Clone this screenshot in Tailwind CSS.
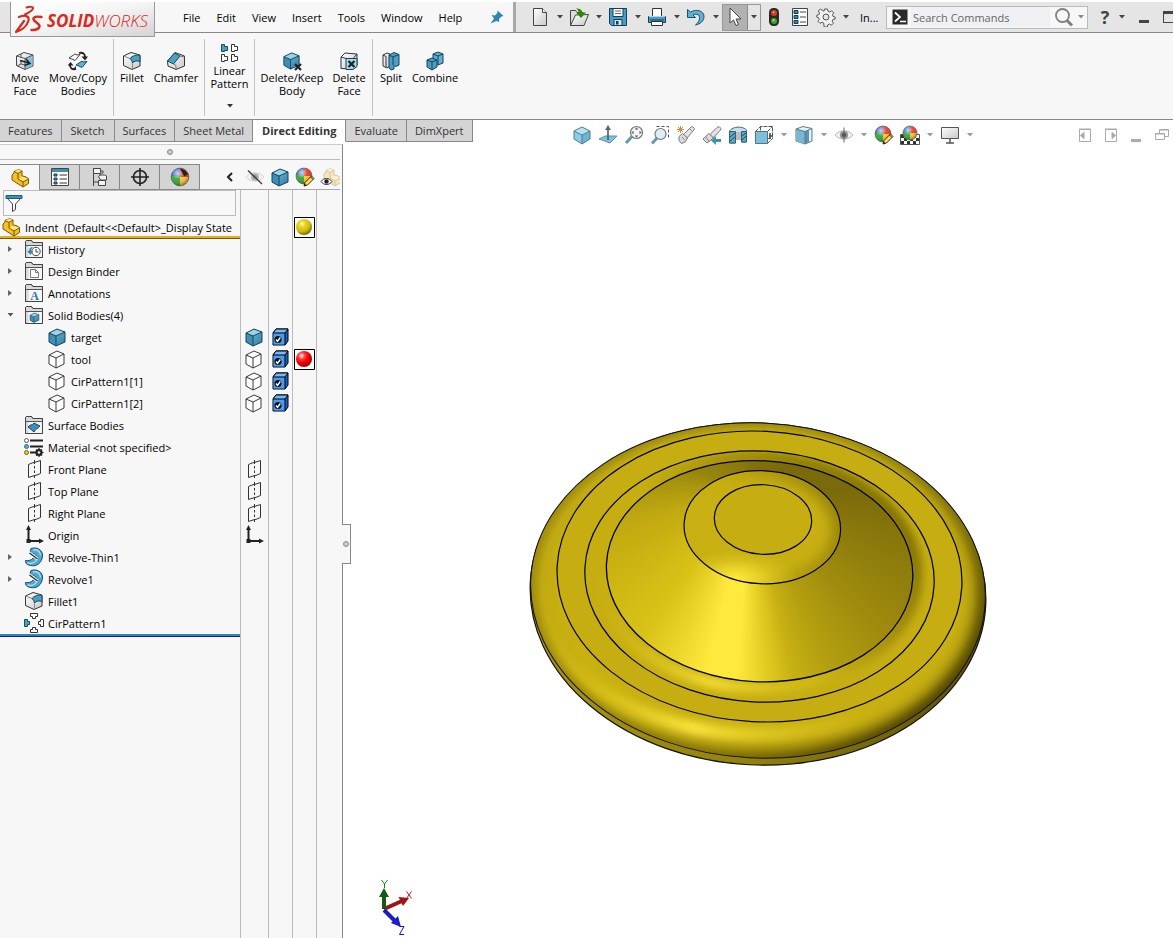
<!DOCTYPE html>
<html lang="en">

<head>
    <meta charset="UTF-8" />
    <meta name="viewport" content="width=device-width, initial-scale=1.0" />
    <title>SOLIDWORKS - Indent</title>
    <script src="https://cdn.jsdelivr.net/npm/@tailwindcss/browser@4"></script>
</head>

<body class="h-screen flex flex-col overflow-hidden bg-white text-black font-['Open_Sans','Noto_Sans',sans-serif] text-[11px] leading-[13px]">

    <!-- Icon sprite -->
    <svg class="absolute w-0 h-0" aria-hidden="true">
        <defs>
            <linearGradient id="blueFace" x1="0" y1="0" x2="1" y2="1">
                <stop offset="0" stop-color="#7cc0dc" />
                <stop offset="1" stop-color="#2f7da3" />
            </linearGradient>
            <linearGradient id="greyFace" x1="0" y1="0" x2="1" y2="1">
                <stop offset="0" stop-color="#ffffff" />
                <stop offset="1" stop-color="#c9c9c9" />
            </linearGradient>
            <radialGradient id="yellowBall" cx=".38" cy=".3" r=".7">
                <stop offset="0" stop-color="#fffbe0" />
                <stop offset=".25" stop-color="#ecd927" />
                <stop offset=".7" stop-color="#cdb710" />
                <stop offset="1" stop-color="#766800" />
            </radialGradient>
            <radialGradient id="redBall" cx=".35" cy=".3" r=".7">
                <stop offset="0" stop-color="#ffffff" />
                <stop offset=".3" stop-color="#ff3b3b" />
                <stop offset=".6" stop-color="#fa0000" />
                <stop offset="1" stop-color="#a80000" />
            </radialGradient>
            <radialGradient id="shine" cx=".38" cy=".3" r=".7">
                <stop offset="0" stop-color="#fff" stop-opacity=".75" />
                <stop offset=".5" stop-color="#fff" stop-opacity=".05" />
                <stop offset="1" stop-color="#000" stop-opacity=".35" />
            </radialGradient>
            <clipPath id="ballClip">
                <circle cx="9" cy="9" r="8" />
            </clipPath>
        </defs>

        <symbol id="i-caret" viewBox="0 0 6 4">
            <path d="M0 0h6L3 3.500z" fill="currentColor" />
        </symbol>
        <symbol id="i-cube" viewBox="0 0 20 20">
            <path d="M2 6 10 2l8 3v10l-9 4-7-4z" fill="url(#blueFace)" />
            <path d="M2 6 10 2l8 3-9 4z" fill="#9ad2e8" />
            <path d="M2 6v9l7 4V9z" fill="#3f8fb5" />
            <path d="M2 6 10 2l8 3v10l-9 4-7-4zM2 6l7 3 9-4M9 9v10" fill="none" stroke="#16455e" />
        </symbol>
        <symbol id="i-cube-light" viewBox="0 0 20 20">
            <path d="M10 2 18 6v8l-8 5-8-5V6z" fill="#8fcbe2" />
            <path d="M10 2 18 6l-8 4-8-4z" fill="#b9e1f0" />
            <path d="M18 6v8l-8 5v-9z" fill="#6fb4d0" />
            <path d="M10 2 18 6v8l-8 5-8-5V6zM2 6l8 4 8-4M10 10v9" fill="none" stroke="#4f7f96" />
        </symbol>
        <symbol id="i-cube-line" viewBox="0 0 20 20">
            <path d="M2 6 10 2l7 3v10l-8 4-7-4zM2 6l7 3 8-4M9 9v10" fill="#fff" stroke="#3a3a3a" stroke-linejoin="round" />
        </symbol>
        <symbol id="i-cube-check" viewBox="0 0 20 20">
            <path d="M2 6l3-4h12v12l-3 4H2z" fill="#1b62cf" stroke="#000" stroke-linejoin="round" />
            <path d="M2.500 6h11.500v11.500H2.500z" fill="#4a9df0" />
            <path d="M2 6 5 2h12l-3 4z" fill="#75b9f7" stroke="#000" stroke-linejoin="round" />
            <path d="M14 6v12" stroke="#000" />
            <circle cx="7" cy="12.500" r="3.600" fill="#111" />
            <path d="M5 12.500 6.500 14.300 9.300 10.500" fill="none" stroke="#fff" stroke-width="1.400" />
        </symbol>
        <symbol id="i-part" viewBox="0 0 20 20">
            <path d="M2 7 4 5V3.500L8.500 1.500 12 3v5l3 .500 3.500 2v5L13 19 2 12z" fill="#f2c029" stroke="#7d5700" stroke-linejoin="round" />
            <path d="M4 3.500 8 5.500 12 3 8.500 1.500zM8 11l4-2.500 6.500 2.500L13 14z" fill="#ffe27a" />
            <path d="M4 3.500 8 5.500 12 3M8 5.500V11l5 3 5.500-3M13 14v5" fill="none" stroke="#7d5700" />
        </symbol>
        <symbol id="i-folder" viewBox="0 0 20 20">
            <path d="M1.500 18.500v-16l1-1h5l1.500 2h9.500v15z" fill="#d8d8d8" stroke="#444" />
            <path d="M4.500 6.500h14v12h-14z" fill="#f6f6f6" />
            <path d="M2 6.500h16" stroke="#555" />
            <path d="M1.500 18.500v-16l1-1h5l1.500 2h9.500v15z" fill="none" stroke="#444" />
        </symbol>
        <symbol id="i-plane" viewBox="0 0 20 20">
            <path d="M4.500 5.500 8 4M12 3l4.500-1.500v13L13 16M9 17l-4.500 1.500v-13" fill="none" stroke="#333" />
            <path d="M10.500 1v4M10.500 7v2.500M10.500 11.500V14M10.500 16v3M8 4l4-1M9 17l4-1" stroke="#333" />
        </symbol>
        <symbol id="i-origin" viewBox="0 0 20 20">
            <path d="M4.500 4v12h11" fill="none" stroke="#222" stroke-width="2" />
            <path d="M4.500 0 7 5H2zM20 16l-5-2.500v5z" fill="#222" />
            <path d="M2.500 14h4v4h-4z" fill="#222" />
        </symbol>
        <symbol id="i-revolve" viewBox="0 0 20 20">
            <path d="M7 1.500C13-.5 19 3 18.500 9c-.5 7-6 11-12 9.500C3 18 1 16 1.500 13.500c3 .5 6-.2 7.500-2.500L14 10.500c-1 0-2-1-2.500-2.500C10.500 6 9 6.500 8 7 6 6 6 3.500 7 1.500z" fill="#4fa6cb" stroke="#15506d" />
            <path d="M9 3c4-1 7.500 1.500 7.500 5.500M3.500 16c4 1 8-.5 10-4" fill="none" stroke="#a8dcf0" stroke-width="1.500" />
            <path d="M5.500 6 13.500 12" stroke="#fff" stroke-width="3" />
            <path d="M5.500 6 13.500 12" stroke="#222" stroke-width="1.200" />
        </symbol>
        <symbol id="i-fillet" viewBox="0 0 20 20">
            <path d="M1.500 5 9 1.500 18 4v11l-8 3.500-8.500-4z" fill="url(#greyFace)" stroke="#333" stroke-linejoin="round" />
            <path d="M1.500 5 8 7.500c2 1 2.500 3 2.500 5v6" fill="none" stroke="#888" />
            <path d="M8 7.500C10 5 15 3 18 5v6c-2-2-6-1-7.500 1C10 9.500 9.500 8.500 8 7.500z" fill="#4b9ec4" stroke="#174c66" />
        </symbol>
        <symbol id="i-chamfer" viewBox="0 0 20 20">
            <path d="M1.500 10 9 1.500 18.500 5v10L10 18.500 2 15z" fill="url(#greyFace)" stroke="#333" stroke-linejoin="round" />
            <path d="M1.500 10 8.500 2l5.500 3-6.500 8z" fill="#4b9ec4" stroke="#174c66" />
            <path d="m14 5 4.500 1M7.500 13l2.500 1.500V18" fill="none" stroke="#777" />
        </symbol>
        <symbol id="i-ball" viewBox="0 0 18 18">
            <g clip-path="url(#ballClip)">
                <path d="M0 0h9v9H0z" fill="#3567c8" />
                <path d="M9 0h9v10H9z" fill="#e33a2b" />
                <path d="M0 8h9v10H0z" fill="#35a435" />
                <path d="M9 9h9v9H9z" fill="#f0c62d" />
            </g>
            <circle cx="9" cy="9" r="8" fill="url(#shine)" stroke="#555" stroke-width=".6" />
        </symbol>
        <symbol id="i-pencil" viewBox="0 0 12 12">
            <path d="M1 11 2 7.500 8.500 1 11 3.500 4.500 10z" fill="#ffd86b" stroke="#3a2a00" />
            <path d="M1 11 1.700 8.500 3.500 10.300z" fill="#222" />
            <path d="M7.500 2 10 4.500" stroke="#3a2a00" />
        </symbol>
        <symbol id="i-eye" viewBox="0 0 20 20">
            <path d="M1 10C5 4.500 15 4.500 19 10 15 15.500 5 15.500 1 10z" fill="#eee" stroke="#bbb" />
            <circle cx="10" cy="10" r="4" fill="#8f8f8f" />
            <circle cx="10" cy="10" r="2" fill="#444" />
        </symbol>
        <symbol id="i-x" viewBox="0 0 8 8">
            <path d="M1 1l6 6M7 1 1 7" stroke="#222" stroke-width="2.200" />
        </symbol>
    </svg>

    <!-- Title bar -->
    <header class="mt-0.5 h-[31px] shrink-0 flex border-b border-[#888] bg-[#e5e5e5]">
        <div class="w-[513px] shrink-0 flex bg-[#f7f7f7]">
            <div class="w-2.5 shrink-0 bg-[#e5e5e5]"></div>
            <div class="relative z-10 h-[35px] w-[145px] shrink-0 flex items-center gap-1 pl-1 border border-t-0 border-[#999] bg-gradient-to-br from-white via-[#f4f4f4] to-[#d4d4d4]">
                <svg class="w-7 h-[29px] shrink-0" viewBox="16 2 28 29" fill="none" stroke="#da291c" stroke-linecap="round" stroke-linejoin="round" aria-hidden="true">
                    <path d="M27.500 4.500C31 3.500 34.500 3.500 34 5.500 33.500 7.500 30 9.500 26 11.500" stroke-width="2" />
                    <path d="M20 14C26 11.500 30.500 13 29.500 17.500 28 23.500 22 27.500 17 29L25 18" stroke-width="2.200" />
                    <path d="M42.500 14C37.500 13 34 14 34.500 16.500 35 19 41.500 20.500 40.500 23.500 39.500 26.500 35.500 27.200 32.500 27" stroke-width="2.400" />
                </svg>
                <h1 class="text-[17px] leading-[20px] italic font-bold text-[#da291c] pt-1">SOLID<span class="font-light">WORKS</span></h1>
            </div>
            <nav class="flex items-center gap-4 pl-7 text-[11px]">
                <a href="#">File</a>
                <a href="#">Edit</a>
                <a href="#">View</a>
                <a href="#">Insert</a>
                <a href="#">Tools</a>
                <a href="#">Window</a>
                <a href="#">Help</a>
            </nav>
            <button class="ml-auto mr-2 w-4" aria-label="Pin menu">
                <svg class="w-4 h-4" viewBox="0 0 16 16" aria-hidden="true">
                    <path d="M8.500 1.500 14.500 7l-2 .5-2.500 2.500.2 3L7.500 12 1.500 14.500 5 9.500 2.500 6l3.500.5L8.300 4z" fill="#2f87b3" />
                </svg>
            </button>
        </div>
        <div class="w-[3px] shrink-0 bg-[#a8a8a8]"></div>

        <!-- Quick access -->
        <div class="flex flex-1 items-center pl-[11px] text-[#444] min-w-0">
            <button class="w-[26px] shrink-0 flex justify-center" aria-label="New">
                <svg class="w-5 h-5" viewBox="0 0 20 20" aria-hidden="true">
                    <path d="M3.500 1.500h9l4 4v13h-13z" fill="url(#greyFace)" stroke="#444" />
                    <path d="M12.500 1.500v4h4" fill="#fff" stroke="#444" />
                </svg>
            </button>
            <button class="w-[13px] shrink-0 flex justify-center" aria-label="New options"><svg class="w-1.5 h-1"><use href="#i-caret" /></svg></button>
            <button class="w-[26px] shrink-0 flex justify-center" aria-label="Open">
                <svg class="w-5 h-5" viewBox="0 0 20 20" aria-hidden="true">
                    <path d="M1.500 18.500v-15h5l1.500 2h6v13z" fill="#ddd" stroke="#444" />
                    <path d="M1.500 18.500 6.500 8l13-.5-4.500 11z" fill="url(#greyFace)" stroke="#444" />
                    <path d="M7 1.500c4 0 6 1.500 6.500 4H17l-5 5.500-4.500-5H10C9.500 4 9 3 7 1.500z" fill="#2c8a00" />
                </svg>
            </button>
            <button class="w-[13px] shrink-0 flex justify-center" aria-label="Open options"><svg class="w-1.5 h-1"><use href="#i-caret" /></svg></button>
            <button class="w-[26px] shrink-0 flex justify-center" aria-label="Save">
                <svg class="w-5 h-5" viewBox="0 0 20 20" aria-hidden="true">
                    <path d="M1.500 1.500h17v17h-15l-2-2z" fill="#4a9cc2" stroke="#123f57" />
                    <path d="M5 1.500h10v8H5z" fill="#fff" stroke="#123f57" />
                    <path d="M7 4h6M7 6.500h6" stroke="#666" />
                    <path d="M6 12.500h8v6H6z" fill="#cfe6f1" stroke="#123f57" />
                    <path d="M8 14h2.500v3.500H8z" fill="#123f57" />
                </svg>
            </button>
            <button class="w-[13px] shrink-0 flex justify-center" aria-label="Save options"><svg class="w-1.5 h-1"><use href="#i-caret" /></svg></button>
            <button class="w-[26px] shrink-0 flex justify-center" aria-label="Print">
                <svg class="w-5 h-5" viewBox="0 0 20 20" aria-hidden="true">
                    <path d="M5.500 9V1.500h9V9" fill="#fff" stroke="#333" />
                    <path d="M1.500 9.500h17v6h-17z" fill="#4a9cc2" stroke="#123f57" />
                    <path d="M2 9.500h16" stroke="#a8d8ec" />
                    <path d="M4.500 14.500h11v4h-11z" fill="#fff" stroke="#333" />
                    <path d="M3 13h14" stroke="#123f57" />
                </svg>
            </button>
            <button class="w-[13px] shrink-0 flex justify-center" aria-label="Print options"><svg class="w-1.5 h-1"><use href="#i-caret" /></svg></button>
            <button class="w-[26px] shrink-0 flex justify-center" aria-label="Undo">
                <svg class="w-5 h-5" viewBox="0 0 20 20" aria-hidden="true">
                    <path d="M1.500 2.500v8h8L7 8c4-2 7 0 6.500 3.500-.2 2.500-1.500 4.500-4 6.500 5-1 8.500-4 8.500-8.500C18 4 11 1.500 4.500 5z" fill="#5fb0d3" stroke="#17516e" stroke-linejoin="round" />
                </svg>
            </button>
            <button class="w-[13px] shrink-0 flex justify-center" aria-label="Undo options"><svg class="w-1.5 h-1"><use href="#i-caret" /></svg></button>
            <div class="w-[39px] h-[27px] shrink-0 flex border border-[#999]">
                <button class="w-[25px] flex justify-center items-center bg-[#b1b1b1] border-r border-[#888]" aria-label="Select">
                    <svg class="w-5 h-5" viewBox="0 0 20 20" aria-hidden="true">
                        <path d="M5 1v15l3.500-3 2.500 5.500 2.500-1L11 12h5z" fill="#fff" stroke="#444" />
                    </svg>
                </button>
                <button class="flex-1 flex justify-center items-center" aria-label="Select options"><svg class="w-1.5 h-1"><use href="#i-caret" /></svg></button>
            </div>
            <button class="w-[26px] shrink-0 flex justify-center" aria-label="Rebuild">
                <svg class="w-5 h-5" viewBox="0 0 20 20" aria-hidden="true">
                    <rect x="5" y="1" width="10" height="18" rx="4.500" fill="#2a2a2a" />
                    <circle cx="10" cy="6" r="3" fill="#e03a1e" />
                    <circle cx="10" cy="14" r="3" fill="#3da52a" />
                    <circle cx="9.500" cy="5.200" r="1" fill="#ff9d80" />
                    <circle cx="9.500" cy="13.200" r="1" fill="#a9e89a" />
                </svg>
            </button>
            <button class="w-[26px] shrink-0 flex justify-center" aria-label="File properties">
                <svg class="w-5 h-5" viewBox="0 0 20 20" aria-hidden="true">
                    <path d="M2.500 1.500h15v17h-15z" fill="#fff" stroke="#444" />
                    <path d="M4 3.500h4v3H4zM4 8.500h4v3H4zM4 13.500h4v3H4z" fill="#2f87b3" stroke="#123f57" />
                    <path d="M10 5h6M10 10h6M10 15h6" stroke="#444" />
                </svg>
            </button>
            <button class="w-[26px] shrink-0 flex justify-center" aria-label="Options">
                <svg class="w-5 h-5" viewBox="0 0 20 20" fill="#f2f2f2" stroke="#555" stroke-linejoin="round" aria-hidden="true">
                    <path d="M8.500 2h3l.5 2.200 1.700.8 2-1.200 2 2-1.200 2 .6 1.700 2 .5v2l-2.200.5-.7 1.700 1.200 2-2 2-2-1.200-1.700.8-.5 2.200h-3L7.700 16 6 15.200l-2 1.200-2-2 1.200-2-.7-1.700-1.700-.5v-2l2-.5.7-1.700-1.200-2 2-2 2 1.200L8 4.200z" />
                    <circle cx="10" cy="10" r="3" fill="#e5e5e5" />
                </svg>
            </button>
            <button class="w-[13px] shrink-0 flex justify-center" aria-label="More options"><svg class="w-1.5 h-1"><use href="#i-caret" /></svg></button>
            <span class="w-[34px] shrink-0 pl-2 text-black">In...</span>
            <div class="w-[202px] h-[23px] shrink-0 flex items-center border border-[#bbb] bg-[#f7f7f7] pl-[5px]">
                <svg class="w-4 h-4 shrink-0" viewBox="0 0 16 16" aria-hidden="true">
                    <path d="M.5 .5h15v15H.5z" fill="#2b2b2b" />
                    <path d="M3 3.500 8 8l-5 4.500M8 12.500h6" fill="none" stroke="#fff" stroke-width="1.700" />
                </svg>
                <input type="text" aria-label="Search Commands" placeholder="Search Commands" class="ml-[3px] pl-0.5 h-5 w-[139px] min-w-0 bg-[#eef0f4] text-[11px] placeholder:text-[#666] outline-none" />
                <button class="ml-1 w-5" aria-label="Search">
                    <svg class="w-5 h-5" viewBox="0 0 20 20" fill="none" stroke="#808080" aria-hidden="true">
                        <circle cx="8.500" cy="8.500" r="6.500" stroke-width="1.800" />
                        <path d="M13 13.500 18 18.500" stroke-width="3" />
                    </svg>
                </button>
                <button class="ml-1 text-[#888]" aria-label="Search scope"><svg class="w-1.5 h-1"><use href="#i-caret" /></svg></button>
            </div>
            <button class="ml-[9px] w-4 shrink-0 text-[18px] leading-[20px] font-bold" aria-label="Help">?</button>
            <button class="w-[18px] shrink-0 flex justify-center" aria-label="Help options"><svg class="w-1.5 h-1"><use href="#i-caret" /></svg></button>
            <button class="ml-2 w-2.5 h-[3px] mt-2 shrink-0 bg-[#444]" aria-label="Minimize"></button>
            <button class="ml-3.5 w-3 h-3 shrink-0 border border-t-[3px] border-[#444]" aria-label="Maximize"></button>
        </div>
    </header>

    <!-- Ribbon -->
    <section class="h-[87px] shrink-0 flex py-1.5 pb-[3px] border-b border-[#888] bg-[#f7f7f7] text-center" aria-label="Direct Editing commands">
        <div class="w-[114px] shrink-0 flex border-r border-[#c3c3c3]">
            <button class="w-[50px] pt-3 flex flex-col items-center">
                <svg class="w-5 h-5" viewBox="0 0 20 20" aria-hidden="true">
                    <path d="M1.500 5 9 1.500 18 4v11l-8 3.500-8.500-4z" fill="url(#greyFace)" stroke="#444" stroke-linejoin="round" />
                    <path d="M10.500 7.500 17.500 4.500v10.500l-7 3z" fill="#7fc3de" />
                    <path d="M1.500 5 10 7.500v11M10 7.500 18 4M6 3v4M6 9v4l-4 2M6 13l4 1" fill="none" stroke="#555" />
                    <path d="M5 9.500 14 12M11 8l4 4.500-5.500 2" fill="none" stroke="#222" stroke-width="1.500" />
                </svg>
                Move<br>Face
            </button>
            <button class="w-14 pt-3 flex flex-col items-center">
                <svg class="w-5 h-5" viewBox="0 0 20 20" aria-hidden="true">
                    <path d="M1 7l6-4 2 1 3-.5-5 6-2-1z" fill="#fff" stroke="#444" />
                    <path d="M8 14l6-4 1 1 4-.5-5 6-2-1z" fill="#5fb0d3" stroke="#174c66" />
                    <path d="M11 2c4-1 6 1 6 4M8 18c-4 1-6-1-6-4" fill="none" stroke="#222" stroke-width="1.800" />
                    <path d="M13.500 5.500H20L17 9.500zM-.5 14.500h6L2.500 11zM8 19V15l-3 3z" fill="#222" />
                </svg>
                Move/Copy<br>Bodies
            </button>
        </div>
        <div class="w-[91px] shrink-0 flex border-r border-[#c3c3c3]">
            <button class="w-9 pt-3 flex flex-col items-center">
                <svg class="w-5 h-5"><use href="#i-fillet" /></svg>
                Fillet
            </button>
            <button class="w-[52px] pt-3 flex flex-col items-center">
                <svg class="w-5 h-5"><use href="#i-chamfer" /></svg>
                Chamfer
            </button>
        </div>
        <div class="w-[50px] shrink-0 flex border-r border-[#c3c3c3]">
            <button class="w-[49px] pt-1 flex flex-col items-center">
                <svg class="w-5 h-5 mb-px" viewBox="0 0 20 20" aria-hidden="true">
                    <path d="M1.500 1.500h3v2h3v4h-3v1h-3z" fill="#4b9ec4" stroke="#174c66" />
                    <path d="M11.500 1.500h3v2h3v4h-3v1h-3zM1.500 11.500h3v2h3v4h-3v1h-3zM11.500 11.500h3v2h3v4h-3v1h-3z" fill="#fff" stroke="#333" />
                </svg>
                Linear<br>Pattern
                <svg class="w-1.5 h-1 mt-3.5 text-[#333]"><use href="#i-caret" /></svg>
            </button>
        </div>
        <div class="w-[118px] shrink-0 flex border-r border-[#c3c3c3]">
            <button class="w-[74px] pt-3 flex flex-col items-center">
                <svg class="w-5 h-5" viewBox="0 0 20 20" aria-hidden="true">
                    <use href="#i-cube" width="19" height="19" />
                    <use href="#i-x" x="12" y="12" width="8" height="8" />
                </svg>
                Delete/Keep<br>Body
            </button>
            <button class="w-10 pt-3 flex flex-col items-center">
                <svg class="w-5 h-5" viewBox="0 0 20 20" aria-hidden="true">
                    <path d="M2 6l4-4 12 1v11l-4 4-12-.5z" fill="url(#greyFace)" stroke="#333" stroke-linejoin="round" />
                    <path d="M7 7.500h11v8l-4 3H7z" fill="#a5d9ec" stroke="#16455e" />
                    <path d="M2 6l5 1.500M18 3l-3.500 4" stroke="#333" />
                    <use href="#i-x" x="8.500" y="9" width="8" height="8" />
                </svg>
                Delete<br>Face
            </button>
        </div>
        <div class="flex">
            <button class="w-9 pt-3 flex flex-col items-center">
                <svg class="w-5 h-5" viewBox="0 0 20 20" aria-hidden="true">
                    <path d="M2 4l4-2 3 1v12l-3 2-4-2z" fill="url(#greyFace)" stroke="#333" stroke-linejoin="round" />
                    <path d="M2 4l3 1.500V16" fill="none" stroke="#333" />
                    <path d="M8 4l5-2.500 5 2V14l-3 1.500-2-1V18l-3 1-2-2z" fill="#4b9ec4" stroke="#16455e" stroke-linejoin="round" />
                    <path d="M8 4l4 2 6-2.500M12 6v8" fill="none" stroke="#16455e" />
                </svg>
                Split
            </button>
            <button class="w-[52px] pt-3 flex flex-col items-center">
                <svg class="w-5 h-5" viewBox="0 0 20 20" aria-hidden="true">
                    <path d="M8 3l5-2 5 2v9l-5 2-5-3z" fill="#5fb0d3" stroke="#16455e" stroke-linejoin="round" />
                    <path d="M8 3l5 2 5-2M13 5v8" fill="none" stroke="#16455e" />
                    <path d="M2 9l5-2 5 2v7l-5 3-5-3z" fill="#4b9ec4" stroke="#16455e" stroke-linejoin="round" />
                    <path d="M2 9l5 2 5-2M7 11v8" fill="none" stroke="#16455e" />
                </svg>
                Combine
            </button>
        </div>
    </section>

    <!-- Command tabs and heads-up view toolbar -->
    <div class="relative z-10 h-6 shrink-0 flex">
        <div class="flex h-[22px] text-[#333] bg-[#d4d4d4]" role="tablist">
            <button role="tab" class="px-2 border-r border-b border-[#888]">Features</button>
            <button role="tab" class="px-[9px] border-r border-b border-[#888]">Sketch</button>
            <button role="tab" class="px-2 border-r border-b border-[#888]">Surfaces</button>
            <button role="tab" class="px-2 border-r border-b border-[#888]">Sheet Metal</button>
            <button role="tab" aria-selected="true" class="px-[9px] bg-white border-r border-b border-r-[#888] border-b-white font-bold">Direct Editing</button>
            <button role="tab" class="px-2 border-r border-b border-[#888]">Evaluate</button>
            <button role="tab" class="px-2 border-r border-b border-[#888]">DimXpert</button>
        </div>
        <div class="ml-24 h-[30px] shrink-0 flex items-center text-[#999]">
            <button class="w-[26px] flex justify-center" aria-label="Isometric"><svg class="w-5 h-5"><use href="#i-cube-light" /></svg></button>
            <button class="w-[26px] flex justify-center" aria-label="Normal to">
                <svg class="w-5 h-5" viewBox="0 0 20 20" aria-hidden="true">
                    <path d="M1 14l6-3h12l-7 7z" fill="#7fc0dc" stroke="#5a93ac" />
                    <path d="M10 15V4" stroke="#555" stroke-width="1.600" />
                    <path d="M10 0l3 5H7z" fill="#666" />
                </svg>
            </button>
            <button class="w-[26px] flex justify-center" aria-label="Zoom to fit">
                <svg class="w-5 h-5" viewBox="0 0 20 20" aria-hidden="true">
                    <path d="M8 11.500 2 18" stroke="#5f9bb8" stroke-width="3" />
                    <circle cx="12.500" cy="7.500" r="6" fill="#f2f6f8" stroke="#777" stroke-width="1.200" />
                    <path d="M12.500 2.500l1.800 2h-3.600zM12.500 12.500l1.800-2h-3.600zM7.500 7.500l2-1.800v3.600zM17.500 7.500l-2-1.800v3.600z" fill="#555" />
                </svg>
            </button>
            <button class="w-[26px] flex justify-center" aria-label="Zoom to area">
                <svg class="w-5 h-5" viewBox="0 0 20 20" aria-hidden="true">
                    <path d="M6.500 1.500h12v12" fill="none" stroke="#555" stroke-dasharray="3 2" />
                    <path d="M7 13 2 18.500" stroke="#5f9bb8" stroke-width="3" />
                    <circle cx="10.500" cy="9" r="5.500" fill="#dfeef5" stroke="#777" stroke-width="1.200" />
                </svg>
            </button>
            <button class="w-[26px] flex justify-center" aria-label="Previous view">
                <svg class="w-5 h-5" viewBox="0 0 20 20" aria-hidden="true">
                    <path d="M7 10 14.500 2.500l2-1 2 2-1 2L11 13z" fill="#e4e4e4" stroke="#777" />
                    <path d="M3 11.500 6.500 8.500l5 4.500-2.500 4-3.500 1.500-2.500-3z" fill="#dcdcdc" stroke="#777" />
                    <path d="M6 12l2.500 3M14 4l2.500 2.500" stroke="#888" />
                    <path d="M4.500 1v7M1 4.500h7M2 2l5 5M7 2 2 7" stroke="#d98a3a" />
                </svg>
            </button>
            <button class="w-[26px] flex justify-center" aria-label="Dynamic annotation views">
                <svg class="w-5 h-5" viewBox="0 0 20 20" aria-hidden="true">
                    <path d="M8 9.500 15 2.500l2-1 2 2-1 2-7 7.500z" fill="#e4e4e4" stroke="#777" />
                    <path d="M1 14 7 8.500l4.500 4.500-6.500 5z" fill="#dcdcdc" stroke="#777" />
                    <path d="M4 12l3 4.500" stroke="#888" />
                    <path d="M9 15.500 14 11v3h5v3h-5v3z" fill="#3f8fb5" />
                </svg>
            </button>
            <button class="w-[26px] flex justify-center" aria-label="Section view">
                <svg class="w-5 h-5" viewBox="0 0 20 20" aria-hidden="true">
                    <path d="M1.500 6C5 1 15 1 18.500 5v12h-5V8h-6v10h-6z" fill="#c9dde6" stroke="#4a6f80" />
                    <path d="M1.500 6.500h6V18h-6zM13.500 6.500h5V17h-5z" fill="#5fa8c8" stroke="#2c627c" />
                    <path d="M2 12l5-4M2 16l5-4M14 11l4-3M14 15l4-4" stroke="#1d4a60" />
                    <path d="M8 7h5v8H8z" fill="#bdbdbd" />
                </svg>
            </button>
            <button class="w-[26px] flex justify-center" aria-label="View orientation">
                <svg class="w-5 h-5" viewBox="0 0 20 20" aria-hidden="true">
                    <path d="M1.500 6.500 6.500 1.500h12v12l-5 5M13.500 6.500l5-5M6.500 1.500v5M13 13.500h5.500" fill="none" stroke="#555" stroke-dasharray="4 1" />
                    <path d="M1.500 6.500h12v12h-12z" fill="#7fbfda" stroke="#3e7b97" />
                    <path d="M16 8v6M15 11h4" stroke="#444" stroke-width="1.500" />
                </svg>
            </button>
            <button class="w-3.5 flex justify-center" aria-label="View orientation options"><svg class="w-1.5 h-1"><use href="#i-caret" /></svg></button>
            <button class="w-[26px] flex justify-center" aria-label="Display style">
                <svg class="w-5 h-5" viewBox="0 0 20 20" aria-hidden="true">
                    <path d="M2 4l7-2.500 9 2V16l-7 3-9-3z" fill="#e9f1f5" stroke="#557d90" stroke-linejoin="round" />
                    <path d="M2 4l9 2.500V19l-9-3z" fill="#79b6d0" />
                    <path d="M11 6.500l4-1.500v12.500L11 19z" fill="#5795b2" />
                    <path d="M2 4l9 2.500 7-3M11 6.500V19" fill="none" stroke="#557d90" />
                </svg>
            </button>
            <button class="w-3.5 flex justify-center" aria-label="Display style options"><svg class="w-1.5 h-1"><use href="#i-caret" /></svg></button>
            <button class="w-[26px] flex justify-center" aria-label="Hide/show items">
                <svg class="w-5 h-5" viewBox="0 0 20 20" aria-hidden="true">
                    <use href="#i-eye" />
                    <path d="M10 2.500v15" stroke="#666" />
                </svg>
            </button>
            <button class="w-3.5 flex justify-center" aria-label="Hide/show options"><svg class="w-1.5 h-1"><use href="#i-caret" /></svg></button>
            <button class="w-[26px] flex justify-center" aria-label="Edit appearance">
                <svg class="w-5 h-5" viewBox="0 0 20 20" aria-hidden="true">
                    <use href="#i-ball" width="18" height="18" />
                    <use href="#i-pencil" x="8" y="8" width="12" height="12" />
                </svg>
            </button>
            <button class="w-[26px] flex justify-center" aria-label="Apply scene">
                <svg class="w-5 h-5" viewBox="0 0 20 20" aria-hidden="true">
                    <path d="M.5 9.500h19v10H.5z" fill="#fff" stroke="#555" />
                    <path d="M1 10h3v3H1zM4 13h3v3H4zM1 16h3v3H1zM7 16h3v3H7zM10 13h3v3h-3zM13 16h3v3h-3zM16 13h3v3h-3zM16 10h-2v3h2z" fill="#333" />
                    <use href="#i-ball" x="2" width="16" height="16" />
                </svg>
            </button>
            <button class="w-3.5 flex justify-center" aria-label="Scene options"><svg class="w-1.5 h-1"><use href="#i-caret" /></svg></button>
            <button class="w-[26px] flex justify-center" aria-label="View settings">
                <svg class="w-5 h-5" viewBox="0 0 20 20" aria-hidden="true">
                    <path d="M1.500 2.500h17v11h-17z" fill="url(#greyFace)" stroke="#555" />
                    <path d="M10 14v4M6 18h8" stroke="#555" stroke-width="1.500" />
                </svg>
            </button>
            <button class="w-3.5 flex justify-center" aria-label="View settings options"><svg class="w-1.5 h-1"><use href="#i-caret" /></svg></button>
        </div>
        <div class="ml-auto h-[30px] shrink-0 flex items-center gap-3.5 pr-1">
            <button aria-label="Dock left">
                <svg class="w-3 h-3.5" viewBox="0 0 12 14" aria-hidden="true">
                    <path d="M.5 1.500h11v12H.5z" fill="none" stroke="#aaa" />
                    <path d="M0 1h12M5 4.500v6L1.500 7.500z" fill="#aaa" stroke="#aaa" />
                </svg>
            </button>
            <button aria-label="Dock right">
                <svg class="w-3 h-3.5" viewBox="0 0 12 14" aria-hidden="true">
                    <path d="M.5 1.500h11v12H.5z" fill="none" stroke="#aaa" />
                    <path d="M0 1h12M7 4.500v6l3.500-3z" fill="#aaa" stroke="#aaa" />
                </svg>
            </button>
            <button class="w-2.5 h-[3px] mt-2.5 bg-[#aaa]" aria-label="Minimize document"></button>
            <button aria-label="Restore document">
                <svg class="w-3.5 h-3.5" viewBox="0 0 14 14" fill="#fff" stroke="#aaa" aria-hidden="true">
                    <path d="M4.500 1.500h9v7h-9zM4 2h10" />
                    <path d="M.5 5.500h9v6h-9zM0 6h10" />
                </svg>
            </button>
        </div>
    </div>

    <main class="flex-1 flex min-h-0">

        <!-- Feature manager -->
        <aside class="w-[343px] shrink-0 flex flex-col border-r border-t border-t-[#ccc] border-r-[#888] bg-[#f7f7f7] pr-0.5">
            <div class="h-[15px] shrink-0 flex justify-center items-center border-b border-[#bbb]">
                <span class="size-1.5 rounded-full border border-[#888] bg-[#ccc]"></span>
            </div>
            <div class="mt-1 h-[26px] shrink-0 flex border-b border-[#aaa]">
                <div class="flex h-[26px]" role="tablist">
                    <button role="tab" aria-selected="true" aria-label="FeatureManager tree" class="w-10 h-[26px] flex justify-center items-center bg-[#f7f7f7] border-t border-r border-[#888]">
                        <svg class="w-5 h-5"><use href="#i-part" /></svg>
                    </button>
                    <button role="tab" aria-label="PropertyManager" class="w-10 flex justify-center items-center bg-[#d4d4d4] border-y border-r border-[#888]">
                        <svg class="w-5 h-5" viewBox="0 0 20 20" aria-hidden="true">
                            <path d="M1.500 1.500h17v17h-17z" fill="#fff" stroke="#444" />
                            <path d="M2 2h16v3H2z" fill="#3f8fb5" />
                            <path d="M4 7h3v2H4zM4 11h3v2H4zM4 15h3v2H4z" fill="#3f8fb5" stroke="#123f57" />
                            <path d="M9.500 8H17M9.500 12H17M9.500 16H17" stroke="#333" />
                        </svg>
                    </button>
                    <button role="tab" aria-label="ConfigurationManager" class="w-10 flex justify-center items-center bg-[#d4d4d4] border-y border-r border-[#888]">
                        <svg class="w-5 h-5" viewBox="0 0 20 20" fill="#f4f4f4" stroke="#444" aria-hidden="true">
                            <path d="M3.500 1v18M3.500 4H8M3.500 15H8" />
                            <path d="M3.500 1.500h7v5h-7z" />
                            <path d="M10 9v-3h3v-2h-2M8.500 9.500l2-1.500h4l2 1v4h-6z" />
                            <path d="M8.500 13.500h7v5h-7z" />
                        </svg>
                    </button>
                    <button role="tab" aria-label="DimXpertManager" class="w-10 flex justify-center items-center bg-[#d4d4d4] border-y border-r border-[#888]">
                        <svg class="w-5 h-5" viewBox="0 0 20 20" fill="none" stroke="#222" stroke-width="1.600" aria-hidden="true">
                            <circle cx="10" cy="10" r="6.500" />
                            <path d="M10 1v18M1 10h18" />
                        </svg>
                    </button>
                    <button role="tab" aria-label="DisplayManager" class="w-10 flex justify-center items-center bg-[#d4d4d4] border-y border-r border-[#888]">
                        <svg class="w-5 h-5" viewBox="0 0 18 18" aria-hidden="true">
                            <use href="#i-ball" />
                            <path d="M9 1.500c3 0 6 2 7 5l-3 2z" fill="#222" />
                        </svg>
                    </button>
                </div>
                <button class="ml-5 w-5 flex justify-center items-center" aria-label="Collapse display pane">
                    <svg class="w-2 h-2.5" viewBox="0 0 8 10" aria-hidden="true"><path d="M6 1 2 5l4 4" fill="none" stroke="#222" stroke-width="2" /></svg>
                </button>
                <div class="ml-auto flex items-center gap-[5px]">
                    <svg class="w-5 h-5" viewBox="0 0 20 20" role="img" aria-label="Hide/Show">
                        <use href="#i-eye" opacity=".6" />
                        <path d="M3 3.500 17 17" stroke="#444" stroke-width="1.500" />
                    </svg>
                    <svg class="w-5 h-5" role="img" aria-label="Display mode"><use href="#i-cube" /></svg>
                    <svg class="w-5 h-5" viewBox="0 0 20 20" role="img" aria-label="Appearances">
                        <use href="#i-ball" width="18" height="18" />
                        <use href="#i-pencil" x="8" y="8" width="12" height="12" />
                    </svg>
                    <svg class="w-5 h-5" viewBox="0 0 20 20" role="img" aria-label="Transparency">
                        <use href="#i-part" opacity=".3" x="2" />
                        <path d="M1 14.500c3-4 8-4 11 0-3 4-8 4-11 0z" fill="#fff" stroke="#333" />
                        <circle cx="6.500" cy="14.500" r="2.200" fill="#222" />
                    </svg>
                </div>
            </div>

            <div class="flex-1 min-h-0 flex">
                <!-- Tree -->
                <div class="w-[240px] shrink-0">
                    <label class="ml-[3px] mr-1 h-[26px] flex items-center border border-[#bbb]">
                        <svg class="w-5 h-5 shrink-0" viewBox="0 0 20 20" role="img" aria-label="Filter">
                            <path d="M2.500 4.500 8.500 11v7.500l3-2V11l6-6.500z" fill="#fff" stroke="#444" stroke-linejoin="round" />
                            <path d="M2 2.500h16v3H2z" fill="#3f8fb5" stroke="#1c5f80" />
                        </svg>
                        <input type="text" aria-label="Filter tree" class="flex-1 min-w-0 bg-transparent outline-none" />
                    </label>
                    <div class="h-[23px] flex items-center gap-1 pl-px border-b border-[#7a5a00] shadow-[inset_0_-2px_0_#eaae1c]">
                        <svg class="w-5 h-5 shrink-0"><use href="#i-part" /></svg>
                        <span class="whitespace-nowrap">Indent&nbsp; (Default&lt;&lt;Default&gt;_Display State</span>
                    </div>
                    <ul class="-mt-px shadow-[0_2px_0_#2f87b3,0_3px_0_#1b1b8f]">
                        <li class="h-[22px] flex items-center gap-1">
                            <button class="w-5 flex justify-center text-[#666]" aria-label="Expand"><svg class="w-1 h-1.5" viewBox="0 0 4 6"><path d="M0 0v6l4-3z" fill="currentColor" /></svg></button>
                            <svg class="w-5 h-5" viewBox="0 0 20 20"><use href="#i-folder" /><circle cx="12" cy="12.500" r="4.200" fill="#fff" stroke="#444" /><path d="M12 10v3h2.500" fill="none" stroke="#444" /><path d="M9 8c-3 0-4 2-4 4H3l3.500 4L9 12H7c0-2 1-3 2-4z" fill="#2f87b3" /></svg>
                            History
                        </li>
                        <li class="h-[22px] flex items-center gap-1">
                            <button class="w-5 flex justify-center text-[#666]" aria-label="Expand"><svg class="w-1 h-1.5" viewBox="0 0 4 6"><path d="M0 0v6l4-3z" fill="currentColor" /></svg></button>
                            <svg class="w-5 h-5" viewBox="0 0 20 20"><use href="#i-folder" /><path d="M6.500 8.500h5l3 3v5h-8zM11.500 8.500v3h3" fill="#fff" stroke="#777" /></svg>
                            Design Binder
                        </li>
                        <li class="h-[22px] flex items-center gap-1">
                            <button class="w-5 flex justify-center text-[#666]" aria-label="Expand"><svg class="w-1 h-1.5" viewBox="0 0 4 6"><path d="M0 0v6l4-3z" fill="currentColor" /></svg></button>
                            <svg class="w-5 h-5" viewBox="0 0 20 20"><use href="#i-folder" /><text x="10.500" y="17" text-anchor="middle" font-family="Liberation Serif" font-weight="bold" font-size="12" fill="#2f78a0">A</text></svg>
                            Annotations
                        </li>
                        <li class="h-[22px] flex items-center gap-1">
                            <button class="w-5 flex justify-center text-[#555]" aria-label="Collapse"><svg class="w-[7px] h-1" viewBox="0 0 6 4"><use href="#i-caret" /></svg></button>
                            <svg class="w-5 h-5" viewBox="0 0 20 20"><use href="#i-folder" /><use href="#i-cube" x="5" y="7" width="11" height="11" /></svg>
                            Solid Bodies(4)
                        </li>
                        <li class="h-[22px] flex items-center gap-1 pl-[47px]"><svg class="w-5 h-5"><use href="#i-cube" /></svg>target</li>
                        <li class="h-[22px] flex items-center gap-1 pl-[47px]"><svg class="w-5 h-5"><use href="#i-cube-line" /></svg>tool</li>
                        <li class="h-[22px] flex items-center gap-1 pl-[47px]"><svg class="w-5 h-5"><use href="#i-cube-line" /></svg>CirPattern1[1]</li>
                        <li class="h-[22px] flex items-center gap-1 pl-[47px]"><svg class="w-5 h-5"><use href="#i-cube-line" /></svg>CirPattern1[2]</li>
                        <li class="h-[22px] flex items-center gap-1 pl-6">
                            <svg class="w-5 h-5" viewBox="0 0 20 20"><use href="#i-folder" /><path d="M4 12c2-3 4-1 6-4l6 3c-2 3-4 2-6 6z" fill="#3f8fb5" stroke="#16455e" /></svg>
                            Surface Bodies
                        </li>
                        <li class="h-[22px] flex items-center gap-1 pl-6">
                            <svg class="w-5 h-5" viewBox="0 0 20 20">
                                <path d="M6 3.500h13M6 9.500h13M6 15.500h6" stroke="#222" stroke-width="1.800" />
                                <circle cx="2.500" cy="3.500" r="2" fill="#fff" stroke="#555" />
                                <circle cx="2.500" cy="9.500" r="2" fill="#4fb0dc" stroke="#2b6f8e" />
                                <circle cx="2.500" cy="15.500" r="2" fill="#f2c029" stroke="#8a6400" />
                                <circle cx="15" cy="15.500" r="2.500" fill="none" stroke="#222" stroke-width="2.200" />
                                <path d="M15 11v9M10.500 15.500h9M12 12.500l6 6M18 12.500l-6 6" stroke="#222" stroke-width="1.200" />
                                <circle cx="15" cy="15.500" r="1.300" fill="#eee" />
                            </svg>
                            Material &lt;not specified&gt;
                        </li>
                        <li class="h-[22px] flex items-center gap-1 pl-6"><svg class="w-5 h-5"><use href="#i-plane" /></svg>Front Plane</li>
                        <li class="h-[22px] flex items-center gap-1 pl-6"><svg class="w-5 h-5"><use href="#i-plane" /></svg>Top Plane</li>
                        <li class="h-[22px] flex items-center gap-1 pl-6"><svg class="w-5 h-5"><use href="#i-plane" /></svg>Right Plane</li>
                        <li class="h-[22px] flex items-center gap-1 pl-6"><svg class="w-5 h-5"><use href="#i-origin" /></svg>Origin</li>
                        <li class="h-[22px] flex items-center gap-1">
                            <button class="w-5 flex justify-center text-[#666]" aria-label="Expand"><svg class="w-1 h-1.5" viewBox="0 0 4 6"><path d="M0 0v6l4-3z" fill="currentColor" /></svg></button>
                            <svg class="w-5 h-5"><use href="#i-revolve" /></svg>Revolve-Thin1
                        </li>
                        <li class="h-[22px] flex items-center gap-1">
                            <button class="w-5 flex justify-center text-[#666]" aria-label="Expand"><svg class="w-1 h-1.5" viewBox="0 0 4 6"><path d="M0 0v6l4-3z" fill="currentColor" /></svg></button>
                            <svg class="w-5 h-5"><use href="#i-revolve" /></svg>Revolve1
                        </li>
                        <li class="h-[22px] flex items-center gap-1 pl-6"><svg class="w-5 h-5"><use href="#i-fillet" /></svg>Fillet1</li>
                        <li class="h-[22px] flex items-center gap-1 pl-6">
                            <svg class="w-5 h-5" viewBox="0 0 20 20" fill="#fff" stroke="#333">
                                <path d="M6.500 .5h7v3h-2v2h-3v-2h-2zM6.500 19.500h7v-3h-2v-2h-3v2h-2zM19.500 6.500v7h-3v-2h-2v-3h2v-2z" />
                                <path d="M.5 6.500v7h3v-2h2v-3h-2v-2z" fill="#4b9ec4" stroke="#174c66" />
                            </svg>
                            CirPattern1
                        </li>
                    </ul>
                </div>

                <!-- Display pane -->
                <div class="w-7 shrink-0 border-l border-[#bbb] pt-[136px] pr-0.5 flex flex-col items-center">
                    <div class="h-[22px] flex items-center"><svg class="w-5 h-5"><use href="#i-cube" /></svg></div>
                    <div class="h-[22px] flex items-center"><svg class="w-5 h-5"><use href="#i-cube-line" /></svg></div>
                    <div class="h-[22px] flex items-center"><svg class="w-5 h-5"><use href="#i-cube-line" /></svg></div>
                    <div class="h-[22px] flex items-center"><svg class="w-5 h-5"><use href="#i-cube-line" /></svg></div>
                    <div class="h-[22px] mt-11 flex items-center"><svg class="w-5 h-5"><use href="#i-plane" /></svg></div>
                    <div class="h-[22px] flex items-center"><svg class="w-5 h-5"><use href="#i-plane" /></svg></div>
                    <div class="h-[22px] flex items-center"><svg class="w-5 h-5"><use href="#i-plane" /></svg></div>
                    <div class="h-[22px] flex items-center"><svg class="w-5 h-5"><use href="#i-origin" /></svg></div>
                </div>
                <div class="w-6 shrink-0 border-l border-[#bbb] pt-[136px] flex flex-col items-center">
                    <div class="h-[22px] flex items-center"><svg class="w-5 h-5"><use href="#i-cube-check" /></svg></div>
                    <div class="h-[22px] flex items-center"><svg class="w-5 h-5"><use href="#i-cube-check" /></svg></div>
                    <div class="h-[22px] flex items-center"><svg class="w-5 h-5"><use href="#i-cube-check" /></svg></div>
                    <div class="h-[22px] flex items-center"><svg class="w-5 h-5"><use href="#i-cube-check" /></svg></div>
                </div>
                <div class="w-6 shrink-0 border-l border-[#bbb] pt-[27px] flex flex-col items-center">
                    <svg class="w-[21px] h-[21px]" viewBox="0 0 21 21"><path d="M.5 .5h20v20H.5z" fill="#fff" stroke="#000" /><circle cx="10" cy="10" r="8" fill="url(#yellowBall)" /></svg>
                    <svg class="w-[21px] h-[21px] mt-[111px]" viewBox="0 0 21 21"><path d="M.5 .5h20v20H.5z" fill="#fff" stroke="#000" /><circle cx="10" cy="10" r="8" fill="url(#redBall)" /></svg>
                </div>
                <div class="flex-1 border-l border-[#bbb]"></div>
            </div>
        </aside>

        <!-- Graphics area -->
        <section class="relative flex-1 min-w-0 flex justify-center items-center pt-[106px]" aria-label="Graphics area">
            <button class="absolute -left-px top-[380px] w-[9px] h-10 flex items-center justify-center bg-[#f7f7f7] border border-l-0 border-[#888]" aria-label="Resize panel">
                <span class="size-1.5 rounded-full border border-[#888] bg-[#ccc]"></span>
            </button>

            <svg class="w-[460px] h-[348px] shrink-0" viewBox="528 420 460 348" role="img" aria-label="Indent part">
                <defs>
                    <radialGradient id="rim" cx=".5" cy=".5" r=".5">
                        <stop offset=".88" stop-color="#c8b012" />
                        <stop offset=".95" stop-color="#c0a911" />
                        <stop offset="1" stop-color="#9c890d" />
                    </radialGradient>
                    <linearGradient id="lip" x1="0" y1="0" x2="1" y2="0">
                        <stop offset="0" stop-color="#a8950f" />
                        <stop offset=".5" stop-color="#93820c" />
                        <stop offset="1" stop-color="#5c5005" />
                    </linearGradient>
                    <!-- strokes that fade along the ring -->
                    <linearGradient id="rimLight" gradientUnits="userSpaceOnUse" x1="535" y1="0" x2="880" y2="0">
                        <stop offset="0" stop-color="#d8c015" stop-opacity="0" />
                        <stop offset=".18" stop-color="#dcc517" stop-opacity=".7" />
                        <stop offset=".46" stop-color="#ffe93c" />
                        <stop offset=".6" stop-color="#f0d92c" stop-opacity=".8" />
                        <stop offset="1" stop-color="#d8c015" stop-opacity="0" />
                    </linearGradient>
                    <linearGradient id="rimDark" gradientUnits="userSpaceOnUse" x1="770" y1="520" x2="950" y2="680">
                        <stop offset="0" stop-color="#4d4303" stop-opacity="0" />
                        <stop offset=".55" stop-color="#4d4303" stop-opacity=".4" />
                        <stop offset="1" stop-color="#4d4303" />
                    </linearGradient>
                    <linearGradient id="ringLight" gradientUnits="userSpaceOnUse" x1="590" y1="600" x2="880" y2="640">
                        <stop offset="0" stop-color="#d8c015" stop-opacity="0" />
                        <stop offset=".45" stop-color="#ffe93c" />
                        <stop offset=".6" stop-color="#ecd62a" stop-opacity=".8" />
                        <stop offset="1" stop-color="#d8c015" stop-opacity="0" />
                    </linearGradient>
                    <linearGradient id="ringDark" gradientUnits="userSpaceOnUse" x1="740" y1="600" x2="870" y2="470">
                        <stop offset="0" stop-color="#6b5d07" stop-opacity="0" />
                        <stop offset=".5" stop-color="#6b5d07" stop-opacity=".4" />
                        <stop offset="1" stop-color="#6b5d07" stop-opacity=".8" />
                    </linearGradient>
                    <linearGradient id="domeDark" gradientUnits="userSpaceOnUse" x1="740" y1="560" x2="840" y2="520">
                        <stop offset="0" stop-color="#6b5d07" stop-opacity="0" />
                        <stop offset="1" stop-color="#6b5d07" stop-opacity=".6" />
                    </linearGradient>
                    <radialGradient id="domeLight">
                        <stop offset="0" stop-color="#ffe93c" />
                        <stop offset=".35" stop-color="#f2dc2f" stop-opacity=".8" />
                        <stop offset="1" stop-color="#dcc517" stop-opacity="0" />
                    </radialGradient>
                    <filter id="blur4" filterUnits="userSpaceOnUse" x="500" y="400" width="520" height="390"><feGaussianBlur stdDeviation="4" /></filter>
                    <filter id="blur7" filterUnits="userSpaceOnUse" x="500" y="400" width="520" height="390"><feGaussianBlur stdDeviation="7" /></filter>
                    <clipPath id="rimClip"><ellipse cx="758" cy="590.500" rx="227.500" ry="167.500" transform="rotate(3 758 590.500)" /></clipPath>
                    <clipPath id="ring2Clip"><ellipse cx="759.500" cy="576.500" rx="174.800" ry="125.500" transform="rotate(3 759.500 576.500)" /></clipPath>
                    <clipPath id="coneClip"><ellipse cx="759.600" cy="571.200" rx="153.300" ry="110.500" transform="rotate(3 759.600 571.200)" /></clipPath>
                    <clipPath id="domeClip"><ellipse cx="762.300" cy="527.200" rx="78.300" ry="56.500" transform="rotate(3 762.300 527.200)" /></clipPath>
                </defs>

                <ellipse cx="758" cy="594" rx="228" ry="171" transform="rotate(3 758 594)" fill="url(#lip)" stroke="#111" stroke-width="1.200" />
                <g clip-path="url(#rimClip)">
                    <ellipse cx="758" cy="590.500" rx="227.500" ry="167.500" transform="rotate(3 758 590.500)" fill="url(#rim)" />
                    <path d="M541 588A217 146 0 0 0 975 590" fill="none" stroke="url(#rimLight)" stroke-width="13" filter="url(#blur4)" />
                    <ellipse cx="758" cy="590" rx="231" ry="171" transform="rotate(3 758 590)" fill="none" stroke="url(#rimDark)" stroke-width="24" filter="url(#blur7)" />
                </g>
                <ellipse cx="758" cy="590.500" rx="227.500" ry="167.500" transform="rotate(3 758 590.500)" fill="none" stroke="#111" />

                <ellipse cx="759.500" cy="576.500" rx="202.600" ry="145.300" transform="rotate(3 759.500 576.500)" fill="#c6ae12" stroke="#000" stroke-width="1.200" />
                <g clip-path="url(#ring2Clip)">
                    <ellipse cx="759.600" cy="571" rx="156" ry="113" transform="rotate(3 759.600 571)" fill="none" stroke="url(#ringDark)" stroke-width="14" filter="url(#blur4)" />
                    <path d="M600 571A160 117 0 0 0 920 571" fill="none" stroke="url(#ringLight)" stroke-width="9" filter="url(#blur4)" />
                </g>
                <ellipse cx="759.500" cy="576.500" rx="174.800" ry="125.500" transform="rotate(3 759.500 576.500)" fill="none" stroke="#000" stroke-width="1.200" />

                <g clip-path="url(#coneClip)">
                    <foreignObject x="600" y="455" width="320" height="232">
                        <div class="w-full h-full bg-[conic-gradient(from_0deg_at_150px_35px,#84730b_0deg,#7a6a0a_60deg,#7a6a0a_90deg,#8f7d0c_118deg,#9e8b0e_137deg,#b5a010_157deg,#c8b113_167deg,#dfc920_174deg,#ffe93c_184deg,#ffe93c_193deg,#ecd62a_204deg,#dac317_216deg,#d2bb14_228deg,#c9b112_242deg,#c0a811_256deg,#ac980f_271deg,#95840d_290deg,#84730b_360deg)]"></div>
                    </foreignObject>
                </g>
                <ellipse cx="759.600" cy="571.200" rx="153.300" ry="110.500" transform="rotate(3 759.600 571.200)" fill="none" stroke="#000" stroke-width="1.300" />

                <g clip-path="url(#domeClip)">
                    <rect x="680" y="465" width="165" height="122" fill="#c8b012" />
                    <ellipse cx="762" cy="527" rx="79" ry="57" transform="rotate(3 762 527)" fill="none" stroke="url(#domeDark)" stroke-width="16" filter="url(#blur7)" />
                    <ellipse cx="736" cy="578" rx="62" ry="28" fill="url(#domeLight)" />
                </g>
                <ellipse cx="762.300" cy="527.200" rx="78.300" ry="56.500" transform="rotate(3 762.300 527.200)" fill="none" stroke="#000" stroke-width="1.200" />
                <ellipse cx="763" cy="519.500" rx="48.700" ry="34.800" transform="rotate(3 763 519.500)" fill="#c6ae12" stroke="#000" stroke-width="1.200" />
            </svg>

            <!-- Orientation triad -->
            <svg class="absolute left-8 bottom-0 w-10 h-[60px]" viewBox="375 878 40 60" role="img" aria-label="Orientation triad">
                <path d="M384 909 402 901" stroke="#a01414" stroke-width="4" />
                <path d="M398.500 897 409 898l-6 8z" fill="#a01414" />
                <path d="M384 909V896" stroke="#145a14" stroke-width="4" />
                <path d="M384 888l5 9h-10z" fill="#145a14" />
                <path d="M384 910 395 921" stroke="#1c1cc8" stroke-width="4" />
                <path d="M391 923l7-7 3 11z" fill="#1c1cc8" />
                <path d="M381.500 880l3 4 3-4M384.500 884v4" fill="none" stroke="#0a8a0a" />
                <path d="M406.500 891.500l5 7M411.500 891.500l-5 7" stroke="#e01010" />
                <path d="M399.500 926.500h4.500l-4.500 8h4.500" fill="none" stroke="#1010e0" />
            </svg>
        </section>
    </main>
</body>

</html>
